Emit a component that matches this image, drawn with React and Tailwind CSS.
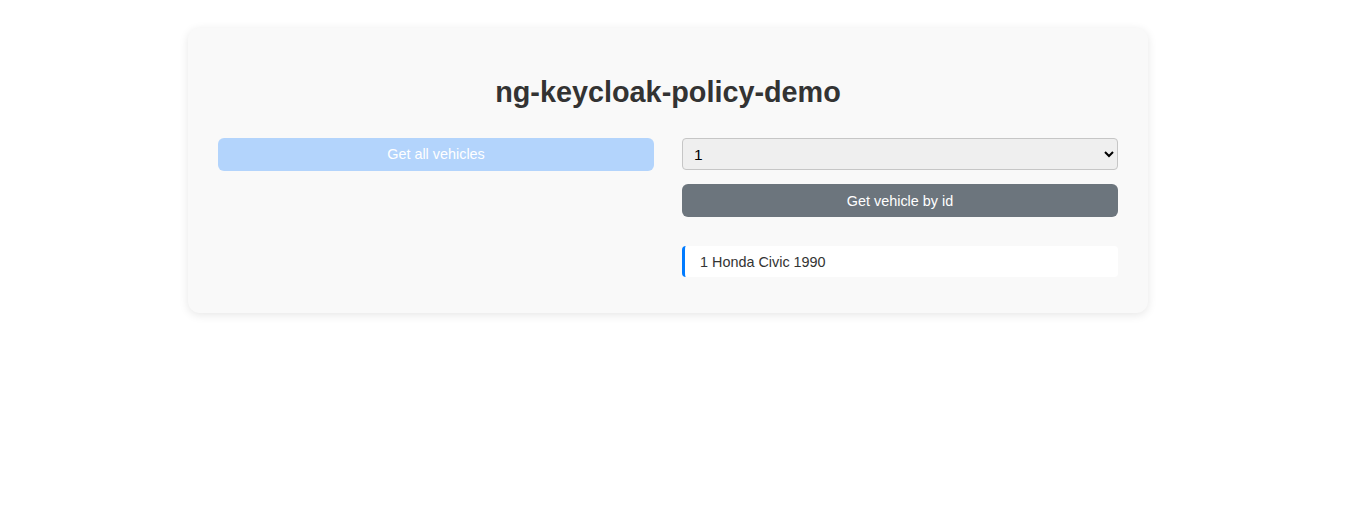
export default function App() {
  return (
    <div className="min-h-screen bg-white pt-[28px] font-['Liberation_Sans',Arial,sans-serif]">
      <div className="ml-[188px] w-[960px] rounded-[12px] bg-[#f9f9f9] p-[30px] pb-[36px] shadow-[0_2px_10px_rgba(0,0,0,0.1)]">
        <h1 className="mt-[17px] mb-[29px] text-center text-[28.8px] font-bold leading-[34px] text-[#333]">
          ng-keycloak-policy-demo
        </h1>
        <div className="grid grid-cols-2 gap-[28px]">
          <div>
            <button
              disabled
              className="h-[33px] w-full rounded-[6px] bg-[#b3d4fc] pt-px text-[14.4px] text-white"
            >
              Get all vehicles
            </button>
          </div>
          <div className="flex flex-col">
            <select
              defaultValue="1"
              className="h-[32px] w-full rounded-[4px] border border-[#c6c6c6] bg-[#efefef] pl-[7px] pr-[4px] text-[15.5px] text-black"
              style={{ appearance: "auto" }}
            >
              <option value="1">1</option>
              <option value="2">2</option>
              <option value="3">3</option>
            </select>
            <button className="mt-[14px] h-[33px] w-full rounded-[6px] bg-[#6c757d] pt-[2px] text-[14.4px] text-white">
              Get vehicle by id
            </button>
            <div className="mt-[29px] flex h-[31px] items-center rounded-[4px] border-l-[3px] border-[#007bff] bg-white pl-[15px] pt-[2px] text-[14.4px] text-[#333]">
              1 Honda Civic 1990
            </div>
          </div>
        </div>
      </div>
    </div>
  );
}
